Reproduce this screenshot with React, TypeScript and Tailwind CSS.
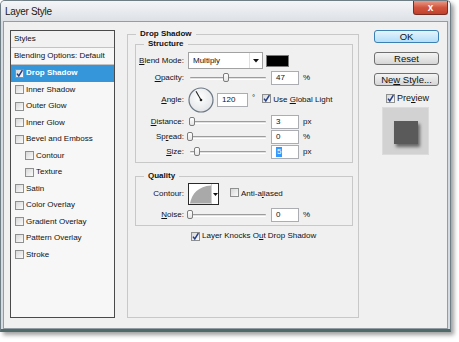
import React from "react";

const FONT = "font-['Liberation_Sans',Arial,sans-serif]";

function U({ children }: { children: React.ReactNode }) {
  return <span className="underline decoration-[0.5px] underline-offset-[1px]">{children}</span>;
}

function Check({ checked = false }: { checked?: boolean }) {
  return (
    <span className="relative inline-flex w-[9px] h-[9px] shrink-0 border border-[#8e8f8f] bg-gradient-to-br from-[#d8d8d8] to-[#fbfbfb]">
      {checked && (
        <svg width="9" height="9" viewBox="0 0 9 9" className="absolute -top-[1px] -left-[1px]">
          <path d="M2 4.6 L3.8 7 L7.4 1.2" stroke="#233f8c" strokeWidth="1.5" fill="none" />
        </svg>
      )}
    </span>
  );
}

function Label({ children }: { children: React.ReactNode }) {
  return <div className="w-[48px] shrink-0 text-right leading-[10px]">{children}</div>;
}

function Slider({ pos }: { pos: number }) {
  return (
    <div className="relative w-[80px] h-[14px] ml-[4px] shrink-0 flex items-center">
      <div className="mx-[2px] w-full h-[3px] bg-[#e2e2e2] border-t border-t-[#9c9c9c] border-b border-b-white rounded-[1px]" />
      <div
        className="absolute top-[2px] w-[6px] h-[9px] bg-gradient-to-b from-white to-[#e4e4e4] border border-[#7d7d7d] rounded-[2px]"
        style={{ left: pos }}
      />
    </div>
  );
}

function Field({ children, className = "" }: { children: React.ReactNode; className?: string }) {
  return (
    <div className={`h-[14px] bg-white border border-[#abadb3] flex items-center pl-[4px] shrink-0 leading-[10px] ${className}`}>
      {children}
    </div>
  );
}

function SliderRow({
  label,
  pos,
  value,
  unit,
  sel = false,
  className = "",
}: {
  label: React.ReactNode;
  pos: number;
  value: string;
  unit: string;
  sel?: boolean;
  className?: string;
}) {
  return (
    <div className={`flex items-center h-[14px] ${className}`}>
      <Label>{label}</Label>
      <Slider pos={pos} />
      <Field className="w-[28px] ml-[3px]">
        {sel ? <span className="bg-[#3399ff] text-white px-[1px]">{value}</span> : value}
      </Field>
      <span className="ml-[4px] leading-[10px]">{unit}</span>
    </div>
  );
}

const items: { label: string; checked?: boolean; selected?: boolean; indent?: boolean }[] = [
  { label: "Drop Shadow", checked: true, selected: true },
  { label: "Inner Shadow" },
  { label: "Outer Glow" },
  { label: "Inner Glow" },
  { label: "Bevel and Emboss" },
  { label: "Contour", indent: true },
  { label: "Texture", indent: true },
  { label: "Satin" },
  { label: "Color Overlay" },
  { label: "Gradient Overlay" },
  { label: "Pattern Overlay" },
  { label: "Stroke" },
];

function Dial() {
  const a = (120 * Math.PI) / 180;
  const x2 = 13 + Math.cos(a) * 10;
  const y2 = 13 - Math.sin(a) * 10;
  return (
    <svg width="26" height="26" viewBox="0 0 26 26" className="ml-[4px] shrink-0">
      <defs>
        <radialGradient id="dg" cx="45%" cy="40%" r="60%">
          <stop offset="0%" stopColor="#ffffff" />
          <stop offset="100%" stopColor="#e2e5e8" />
        </radialGradient>
      </defs>
      <circle cx="13" cy="13" r="12" fill="url(#dg)" stroke="#6c7783" strokeWidth="1.2" />
      <line x1="13" y1="13" x2={x2} y2={y2} stroke="#222" strokeWidth="1.1" />
      <circle cx="13" cy="13" r="1.3" fill="#222" />
    </svg>
  );
}

function Btn({ children, primary = false, className = "" }: { children: React.ReactNode; primary?: boolean; className?: string }) {
  return (
    <div
      className={`w-[65px] h-[13px] rounded-[3px] border flex items-center justify-center text-[9.5px] leading-[10px] ${
        primary
          ? "border-[#3c7fb1] bg-gradient-to-b from-[#e5f4fc] to-[#b3defa]"
          : "border-[#707070] bg-gradient-to-b from-[#f4f4f4] to-[#d6d6d6]"
      } ${className}`}
    >
      <span>{children}</span>
    </div>
  );
}

export default function App() {
  return (
    <div className={`w-[459px] h-[342px] bg-white overflow-hidden ${FONT} text-[8px] text-[#111]`}>
      <div className="w-[451px] h-[332px] flex flex-col border border-[#6f7e85] border-b-[3px] border-b-[#4e6a69] rounded-t-[5px] bg-[#d6dbe1] px-[2px] shadow-[3px_3px_4px_rgba(0,0,0,0.38)]">
        {/* title bar */}
        <div className="h-[20px] flex justify-between items-start bg-gradient-to-b from-[#f4f5f7] to-[#dde1e6] -mx-[2px] pl-[4px] pr-[2px] rounded-t-[4px]">
          <span className="mt-[5px] text-[10px] leading-[11px] text-[#1a1a1a] tracking-[-0.3px]">Layer Style</span>
          <div className="w-[35px] h-[14px] rounded-b-[3px] border border-t-0 border-[#7a2d22] bg-gradient-to-b from-[#e79a88] via-[#d2553f] to-[#c2402c] flex items-center justify-center">
            <span className="text-white text-[10px] font-bold leading-[10px]">x</span>
          </div>
        </div>

        {/* content */}
        <div className="h-[308px] border border-[#949ca4] bg-[#f0f0f0] flex items-start pl-[6px] pr-[8px]">
          {/* list */}
          <div className="mt-[8px] w-[105px] h-[288px] shrink-0 border border-[#4a4a4a] bg-[#f7f7f7] flex flex-col">
            <div className="h-[17px] border-b border-[#c3c3c3] flex items-center pl-[3px] bg-[#f1f1f1]">Styles</div>
            <div className="h-[17px] border-b border-[#c3c3c3] flex items-center pl-[3px]">Blending Options: Default</div>
            {items.map((it) => (
              <div
                key={it.label}
                className={`h-[16.5px] flex items-center gap-[2px] ${it.indent ? "pl-[14px]" : "pl-[4px]"} ${
                  it.selected ? "bg-[#3597da] text-white font-bold" : ""
                }`}
              >
                <Check checked={it.checked} />
                <span className="leading-[10px]">{it.label}</span>
              </div>
            ))}
          </div>

          {/* middle */}
          <fieldset className="mt-[7px] ml-[12px] w-[232px] h-[289px] shrink-0 border border-[#c8c8c8] flex flex-col">
            <legend className="ml-[8px] px-[4px] font-bold leading-[10px]">Drop Shadow</legend>

            <fieldset className="ml-[7px] mr-[5px] border border-[#c8c8c8] pt-[3px] pb-[3px]">
              <legend className="ml-[8px] px-[4px] font-bold leading-[10px]">Structure</legend>
              <div className="flex items-center h-[17px]">
                <Label>
                  <U>B</U>lend Mode:
                </Label>
                <div className="ml-[4px] w-[75px] h-[17px] bg-white border border-[#a2a2a2] flex items-center">
                  <span className="pl-[4px] flex-1 leading-[10px]">Multiply</span>
                  <div className="w-[13px] h-full border-l border-[#e0e0e0] flex items-center justify-center">
                    <svg width="6" height="4" viewBox="0 0 6 4">
                      <path d="M0 0 L6 0 L3 3.5 Z" fill="#111" />
                    </svg>
                  </div>
                </div>
                <div className="ml-[3px] w-[23px] h-[12px] bg-black border border-[#7a7a7a]" />
              </div>
              <SliderRow className="mt-[2px]" label={<><U>O</U>pacity:</>} pos={35} value="47" unit="%" />
              <div className="flex items-center h-[26px] mt-[2px]">
                <Label>
                  <U>A</U>ngle:
                </Label>
                <Dial />
                <Field className="w-[31px] ml-[3px]">120</Field>
                <span className="ml-[4px] self-start mt-[7px] leading-[8px]">°</span>
                <span className="ml-[7px]">
                  <Check checked />
                </span>
                <span className="ml-[2px] leading-[10px]">
                  Use <U>G</U>lobal Light
                </span>
              </div>
              <SliderRow className="mt-[2px]" label={<><U>D</U>istance:</>} pos={1} value="3" unit="px" />
              <SliderRow className="mt-[1px]" label={<>Sp<U>r</U>ead:</>} pos={-1} value="0" unit="%" />
              <SliderRow className="mt-[1px]" label={<><U>S</U>ize:</>} pos={6} value="5" unit="px" sel />
            </fieldset>

            <fieldset className="mt-[8px] ml-[7px] mr-[5px] border border-[#c8c8c8] pt-[2px] pb-[3px]">
              <legend className="ml-[8px] px-[4px] font-bold leading-[10px]">Quality</legend>
              <div className="flex items-center h-[22px]">
                <Label>Contour:</Label>
                <div className="ml-[4px] w-[31px] h-[22px] border border-[#2a2a2a] bg-white flex">
                  <svg width="23" height="20" viewBox="0 0 23 20" className="border-r border-[#d0d0d0]">
                    <path d="M1 20 C3 9 10 2 23 1 L23 20 Z" fill="#a9a9a9" />
                  </svg>
                  <div className="flex-1 flex items-center justify-center">
                    <svg width="5" height="3" viewBox="0 0 5 3">
                      <path d="M0 0 L5 0 L2.5 3 Z" fill="#111" />
                    </svg>
                  </div>
                </div>
                <span className="ml-[11px]">
                  <Check />
                </span>
                <span className="ml-[2px] leading-[10px]">
                  Anti-a<U>l</U>iased
                </span>
              </div>
              <SliderRow className="mt-[3px]" label={<><U>N</U>oise:</>} pos={-1} value="0" unit="%" />
            </fieldset>

            <div className="mt-[5px] ml-[63px] flex items-center h-[10px]">
              <Check checked />
              <span className="ml-[2px] leading-[10px]">
                Layer Knocks O<U>u</U>t Drop Shadow
              </span>
            </div>
          </fieldset>

          {/* right column */}
          <div className="mt-[8px] ml-[15px] w-[65px] shrink-0 flex flex-col">
            <Btn primary>OK</Btn>
            <Btn className="mt-[9px]">Reset</Btn>
            <Btn className="mt-[8px]">
              Ne<U>w</U> Style...
            </Btn>
            <div className="mt-[7px] ml-[12px] flex items-center h-[10px]">
              <Check checked />
              <span className="ml-[2px] text-[9px] leading-[10px]">
                Pre<U>v</U>iew
              </span>
            </div>
            <div className="mt-[4px] ml-[8px] w-[47px] h-[48px] bg-[#d2d2d2] border border-[#dcdcdc] flex items-start">
              <div className="mt-[13px] ml-[11px] w-[24px] h-[23px] bg-[#5a5a5a] shadow-[2px_3px_3px_rgba(0,0,0,0.5)]" />
            </div>
          </div>
        </div>
      </div>
    </div>
  );
}
